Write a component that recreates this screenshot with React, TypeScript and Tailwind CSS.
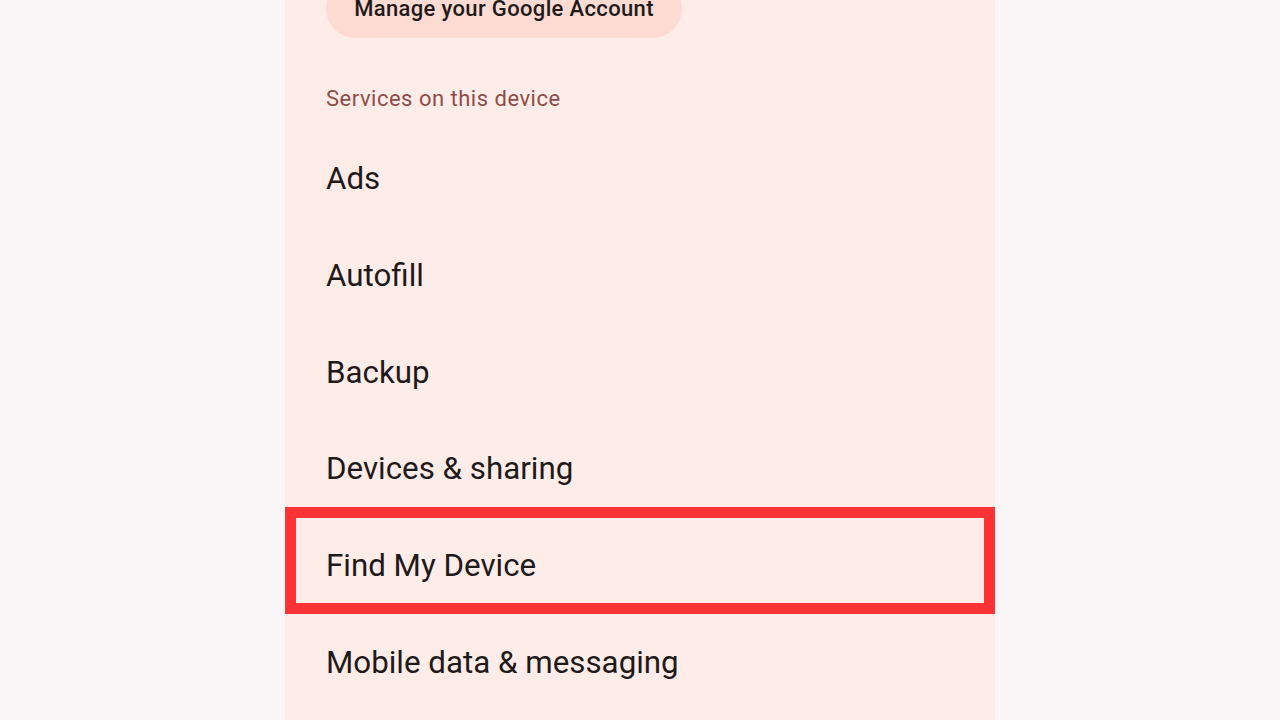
import React from 'react';

const items = ['Ads', 'Autofill', 'Backup', 'Devices & sharing', 'Find My Device', 'Mobile data & messaging'];

export default function App() {
  return (
    <div className="w-[1280px] h-[720px] overflow-hidden bg-[#f8f6f7]" style={{ fontFamily: 'Roboto, "Noto Sans", sans-serif' }}>
      <div className="mx-auto w-[710px] h-[720px] bg-[#feece9] flex flex-col">
        <div className="pl-[41px] -mt-[21px]">
          <button className="h-[59px] w-[356px] rounded-full bg-[#fddbd3] text-[#1f1a19] text-[22px] tracking-[0.35px] font-medium flex items-center justify-center">
            Manage your Google Account
          </button>
        </div>
        <div className="pl-[41px] mt-[47px] h-[28px] leading-[28px] text-[22px] tracking-[0.5px] text-[#8e4e47]">Services on this device</div>
        <div className="mt-[18px] flex flex-col">
          {items.map((label) => (
            <div key={label} className="relative h-[96.8px] flex items-center pl-[41px] text-[31.3px] text-[#1f1a19]">
              {label}
              {label === 'Find My Device' && (
                <div className="absolute left-0 right-0 -top-[11px] bottom-[1px] border-[11px] border-[#ff3236]" />
              )}
            </div>
          ))}
        </div>
      </div>
    </div>
  );
}
